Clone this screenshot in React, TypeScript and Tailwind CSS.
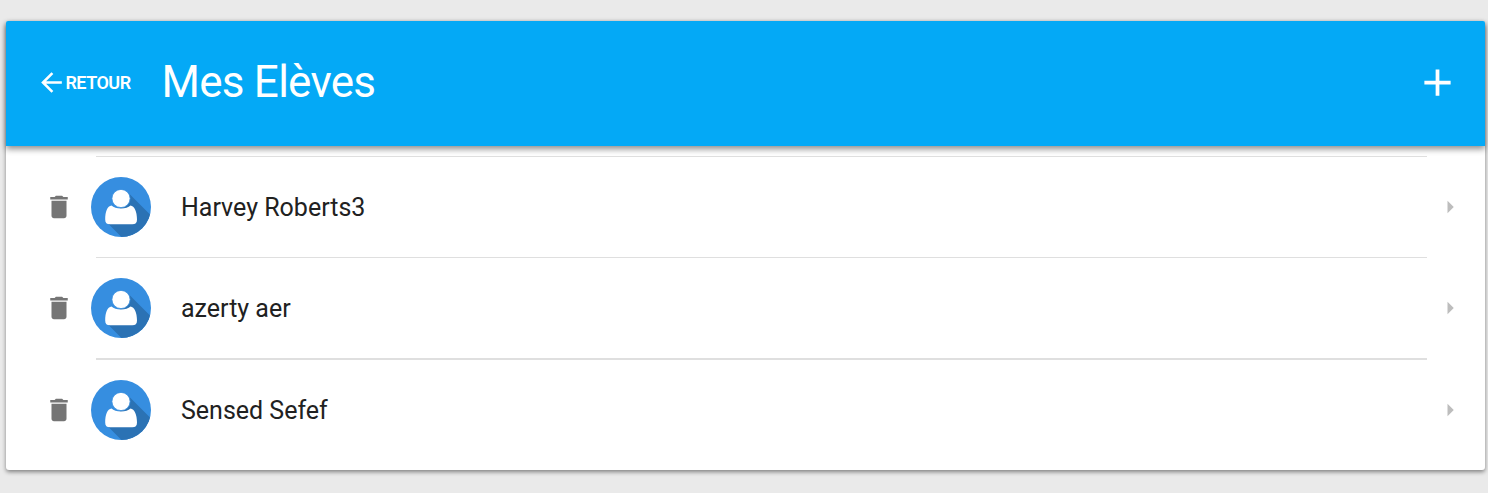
const students = [
  { name: 'Harvey Roberts3', row: 'h-[101px]', line: 'h-px' },
  { name: 'azerty aer', row: 'h-[101px]', line: 'h-px' },
  { name: 'Sensed Sefef', row: 'h-[102px]', line: 'h-[2px]' },
];

function Avatar({ id }: { id: string }) {
  return (
    <svg className="ml-[17.5px] size-[60px] shrink-0" viewBox="0 0 60 60">
      <defs>
        <clipPath id={id}>
          <circle cx="30" cy="30" r="30" />
        </clipPath>
      </defs>
      <g clipPath={`url(#${id})`}>
        <rect width="60" height="60" fill="#368ee0" />
        <path d="M36.500 15 66 44.500V66H36.500L17 46.500 30 30Z" fill="#2b72b4" />
      </g>
      <path
        d="M20.500 28.600C16.400 29 14.200 35 14.200 42.500c0 3.300 1.500 4.800 4.800 4.800h22.300c3.200 0 4.700-1.500 4.700-4.800 0-7.500-2.600-13.500-6.500-13.900-2.100 1.800-5.300 2.900-9.500 2.900s-7.400-1.100-9.500-2.900Z"
        fill="#fff"
      />
      <circle cx="30" cy="21.500" r="9.100" fill="#fff" stroke="#368ee0" strokeWidth="0.8" />
    </svg>
  );
}

export default function App() {
  return (
    <div className="h-[493px] bg-[#eaeaea] pt-[21px] pr-[3px] pl-[6px] font-['Roboto',sans-serif]">
      <main className="h-[449px] rounded-[3px] bg-white shadow-[0_2px_4px_rgba(0,0,0,0.45)]">
        <header className="relative flex h-[125px] items-center rounded-t-[2px] bg-[#04a9f6] pr-[25px] pb-[2px] pl-[29.5px] text-white shadow-[0_3px_6px_rgba(0,0,0,0.45)]">
          <button className="flex h-[30px] items-center">
            <svg className="size-[31px]" viewBox="0 0 24 24" fill="currentColor">
              <path d="M20 11H7.830l5.590-5.590L12 4l-8 8 8 8 1.410-1.410L7.830 13H20v-2z" />
            </svg>
            <span className="-ml-[2px] w-[67px] pt-px text-[18px] leading-[30px] font-semibold tracking-[-0.5px] whitespace-nowrap">RETOUR</span>
          </button>
          <h1 className="ml-[30px] pb-px text-[44px] leading-[50px] tracking-[-0.75px] whitespace-nowrap">Mes Elèves</h1>
          <button className="ml-auto">
            <svg className="size-[45px]" viewBox="0 0 24 24" fill="currentColor">
              <path d="M19 13h-6v6h-2v-6H5v-2h6V5h2v6h6v2z" />
            </svg>
          </button>
        </header>
        <ul className="pt-[10px]">
          {students.map((s, i) => (
            <li key={s.name} className={`flex flex-col ${s.row}`}>
              <div className={`mr-[58px] ml-[90px] shrink-0 bg-[#dfdfdf] ${s.line}`} />
              <div className="flex h-[100px] items-center pr-[20px] pl-[37.5px]">
                <svg className="size-[30px] shrink-0" viewBox="0 0 24 24" fill="#757575">
                  <path d="M6 19c0 1.100.9 2 2 2h8c1.100 0 2-.9 2-2V7H6v12zM19 4h-3.500l-1-1h-5l-1 1H5v2h14V4z" />
                </svg>
                <Avatar id={`avatar-${i}`} />
                <span className="ml-[30px] pt-[2px] text-[25px] leading-[32px] text-[#212121]">{s.name}</span>
                <svg className="ml-auto size-[30px]" viewBox="0 0 24 24" fill="#bdbdbd">
                  <path d="M10 17l5-5-5-5v10z" />
                </svg>
              </div>
            </li>
          ))}
        </ul>
      </main>
    </div>
  );
}
